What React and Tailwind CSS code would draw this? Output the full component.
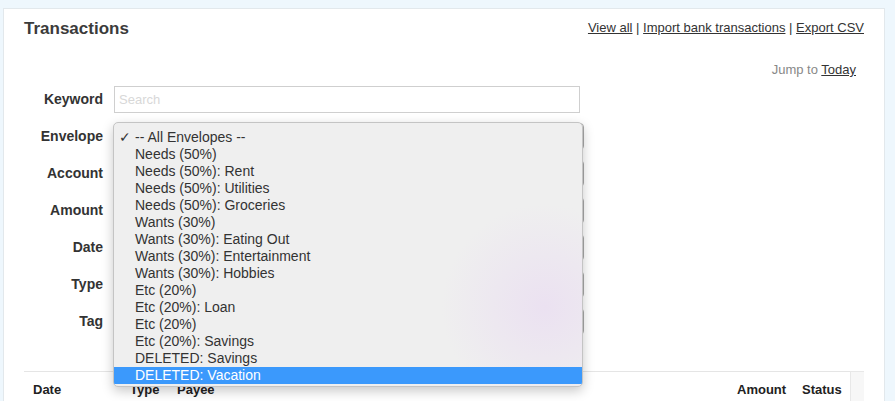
import { useState } from 'react'

const ENVELOPES = [
  '-- All Envelopes --',
  'Needs (50%)',
  'Needs (50%): Rent',
  'Needs (50%): Utilities',
  'Needs (50%): Groceries',
  'Wants (30%)',
  'Wants (30%): Eating Out',
  'Wants (30%): Entertainment',
  'Wants (30%): Hobbies',
  'Etc (20%)',
  'Etc (20%): Loan',
  'Etc (20%)',
  'Etc (20%): Savings',
  'DELETED: Savings',
  'DELETED: Vacation',
]

const FIELDS = ['Keyword', 'Envelope', 'Account', 'Amount', 'Date', 'Type', 'Tag']

const FormRow = ({ label, children }) => (
  <div className="flex items-center gap-[11px] h-[27px]">
    <label className="w-[79px] text-right font-bold text-[14px] text-[#333]">{label}</label>
    {children}
  </div>
)

const App = () => {
  const [selected] = useState(0)
  const [hovered] = useState(14)

  return (
    <div
      className="h-[401px] overflow-hidden bg-[#eef7fd] pt-[8px] pl-[3px] pr-[10px]"
      style={{ fontFamily: '"Liberation Sans", Arial, sans-serif' }}
    >
      <div className="relative h-[420px] bg-white border border-[#e2e8ec] pt-[10px] px-[20px]">
        {/* Header */}
        <div className="flex justify-between items-start">
          <h1 className="text-[17px] leading-[20px] font-bold text-[#3b3b3b]">Transactions</h1>
          <div className="mt-[1px] text-[13px] leading-[16px] text-[#333]">
            <a className="underline">View all</a> | <a className="underline">Import bank transactions</a> | <a className="underline">Export CSV</a>
          </div>
        </div>

        {/* Jump to */}
        <div className="mt-[23px] pr-[8px] text-right text-[13px] leading-[16px] text-[#888]">
          Jump to <a className="underline text-[#333]">Today</a>
        </div>

        {/* Filter form */}
        <div className="mt-[8px] flex flex-col gap-[10px]">
          {FIELDS.map((f) => (
            <FormRow key={f} label={f}>
              {f === 'Keyword' ? (
                <input
                  placeholder="Search"
                  className="w-[466px] h-[27px] border border-[#cfcfcf] px-[4px] text-[13px] placeholder:text-[#d8d8d8] outline-none"
                />
              ) : (
                <div className="w-[470px] h-[27px] border border-[#a9a9a9] rounded-[4px] bg-[#f6f6f6]" />
              )}
            </FormRow>
          ))}
        </div>

        {/* Table header */}
        <div className="mt-[36px] flex">
          <div className="flex-1 flex items-center h-[36px] border-t border-[#e5e5e5] text-[13px] font-bold text-[#222]">
            <div className="w-[106px] pl-[9px]">Date</div>
            <div className="w-[47px]">Type</div>
            <div className="flex-1">Payee</div>
            <div className="w-[65px]">Amount</div>
            <div className="w-[48px]">Status</div>
          </div>
          <div className="w-[14px] h-[36px] bg-[#f7f7f7] border-l border-t border-[#e8e8e8]" />
        </div>

        {/* Open envelope dropdown */}
        <div className="absolute left-[109px] top-[113px] w-[470px] h-[265px] rounded-[5px] border border-[#c4c4c4] bg-[#efefef] shadow-[0_4px_12px_rgba(0,0,0,0.22)] pt-[6px] overflow-hidden">
          <div className="absolute inset-0 bg-[radial-gradient(circle_at_92%_70%,#ebe1f1_0%,rgba(239,239,239,0)_22%)]" />
          <div className="relative">
            {ENVELOPES.map((e, i) => (
              <div
                key={i}
                className={`relative h-[17px] leading-[17px] pl-[21px] text-[14px] ${
                  i === hovered ? 'bg-[#3b99fc] text-white' : 'text-[#333]'
                }`}
              >
                {i === selected && <span className="absolute left-[5px] top-0">✓</span>}
                {e}
              </div>
            ))}
          </div>
        </div>
      </div>
    </div>
  )
}

export default App
